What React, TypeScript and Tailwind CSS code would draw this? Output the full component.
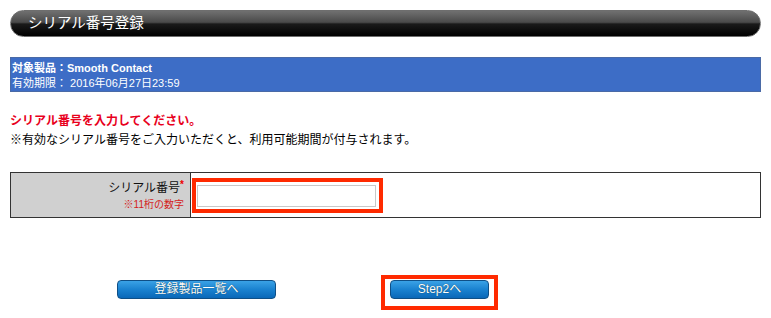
import React from "react";

const font = { fontFamily: '"Liberation Sans", "Noto Sans CJK JP", sans-serif' };

export default function App() {
  return (
    <div className="w-[771px] h-[318px] bg-white px-[10px] pt-[10px]" style={font}>
      <div className="h-[27px] rounded-full border border-[#6e6e6e] bg-[linear-gradient(to_bottom,#707070_0%,#4a4a4a_45%,#1a1a1a_52%,#000000_100%)] pl-[17px] text-[14.5px] leading-[25px] text-white">
        シリアル番号登録
      </div>

      <div className="mt-[20px] h-[35px] border border-[#4a6aa6] bg-[#3d6dc6] pl-[1px] pt-[3px] text-[11px] leading-[15px] text-white">
        <div className="font-bold">対象製品：Smooth Contact</div>
        <div>有効期限： 2016年06月27日23:59</div>
      </div>

      <div className="mt-[20px] text-[12px] font-bold leading-[18px] text-[#e8001c]">
        シリアル番号を入力してください。
      </div>
      <div className="mt-[1px] text-[12px] leading-[18px] text-black">
        ※有効なシリアル番号をご入力いただくと、利用可能期間が付与されます。
      </div>

      <div className="mt-[23px] flex h-[46px] border border-[#333]">
        <div className="flex w-[180px] flex-col items-end justify-center border-r border-[#333] bg-[#d0d0d0] pr-[6px]">
          <div className="text-[12px] leading-[17px] text-[#111]">
            シリアル番号<span className="relative top-[-4px] text-[10px] font-bold text-[#e00]">*</span>
          </div>
          <div className="mt-[1px] text-[10px] leading-[13px] text-[#d42020]">※11桁の数字</div>
        </div>
        <div className="flex items-center pl-[1px]">
          <div className="border-[4px] border-[#ff2a00] pb-[2px] pl-[1px] pr-[3px] pt-[3px]">
            <input className="block h-[22px] w-[179px] border border-[#c8c8c8] bg-white outline-none" />
          </div>
        </div>
      </div>

      <div className="mt-[57px] flex items-start pl-[107px]">
        <button className="mt-[5px] h-[19px] w-[159px] rounded-[4px] border border-[#0f4f86] bg-[linear-gradient(to_bottom,#3aa2e6_0%,#1a82d0_50%,#0a68b8_100%)] text-[12px] leading-[17px] text-white [text-shadow:0_0_1px_#034]">
          登録製品一覧へ
        </button>
        <div className="ml-[105px] border-[4px] border-[#ff2a00] px-[5px] pb-[7px] pt-[1px]">
          <button className="block h-[19px] w-[99px] rounded-[4px] border border-[#0f4f86] bg-[linear-gradient(to_bottom,#3aa2e6_0%,#1a82d0_50%,#0a68b8_100%)] text-[12px] leading-[17px] text-white [text-shadow:0_0_1px_#034]">
            Step2へ
          </button>
        </div>
      </div>
    </div>
  );
}
